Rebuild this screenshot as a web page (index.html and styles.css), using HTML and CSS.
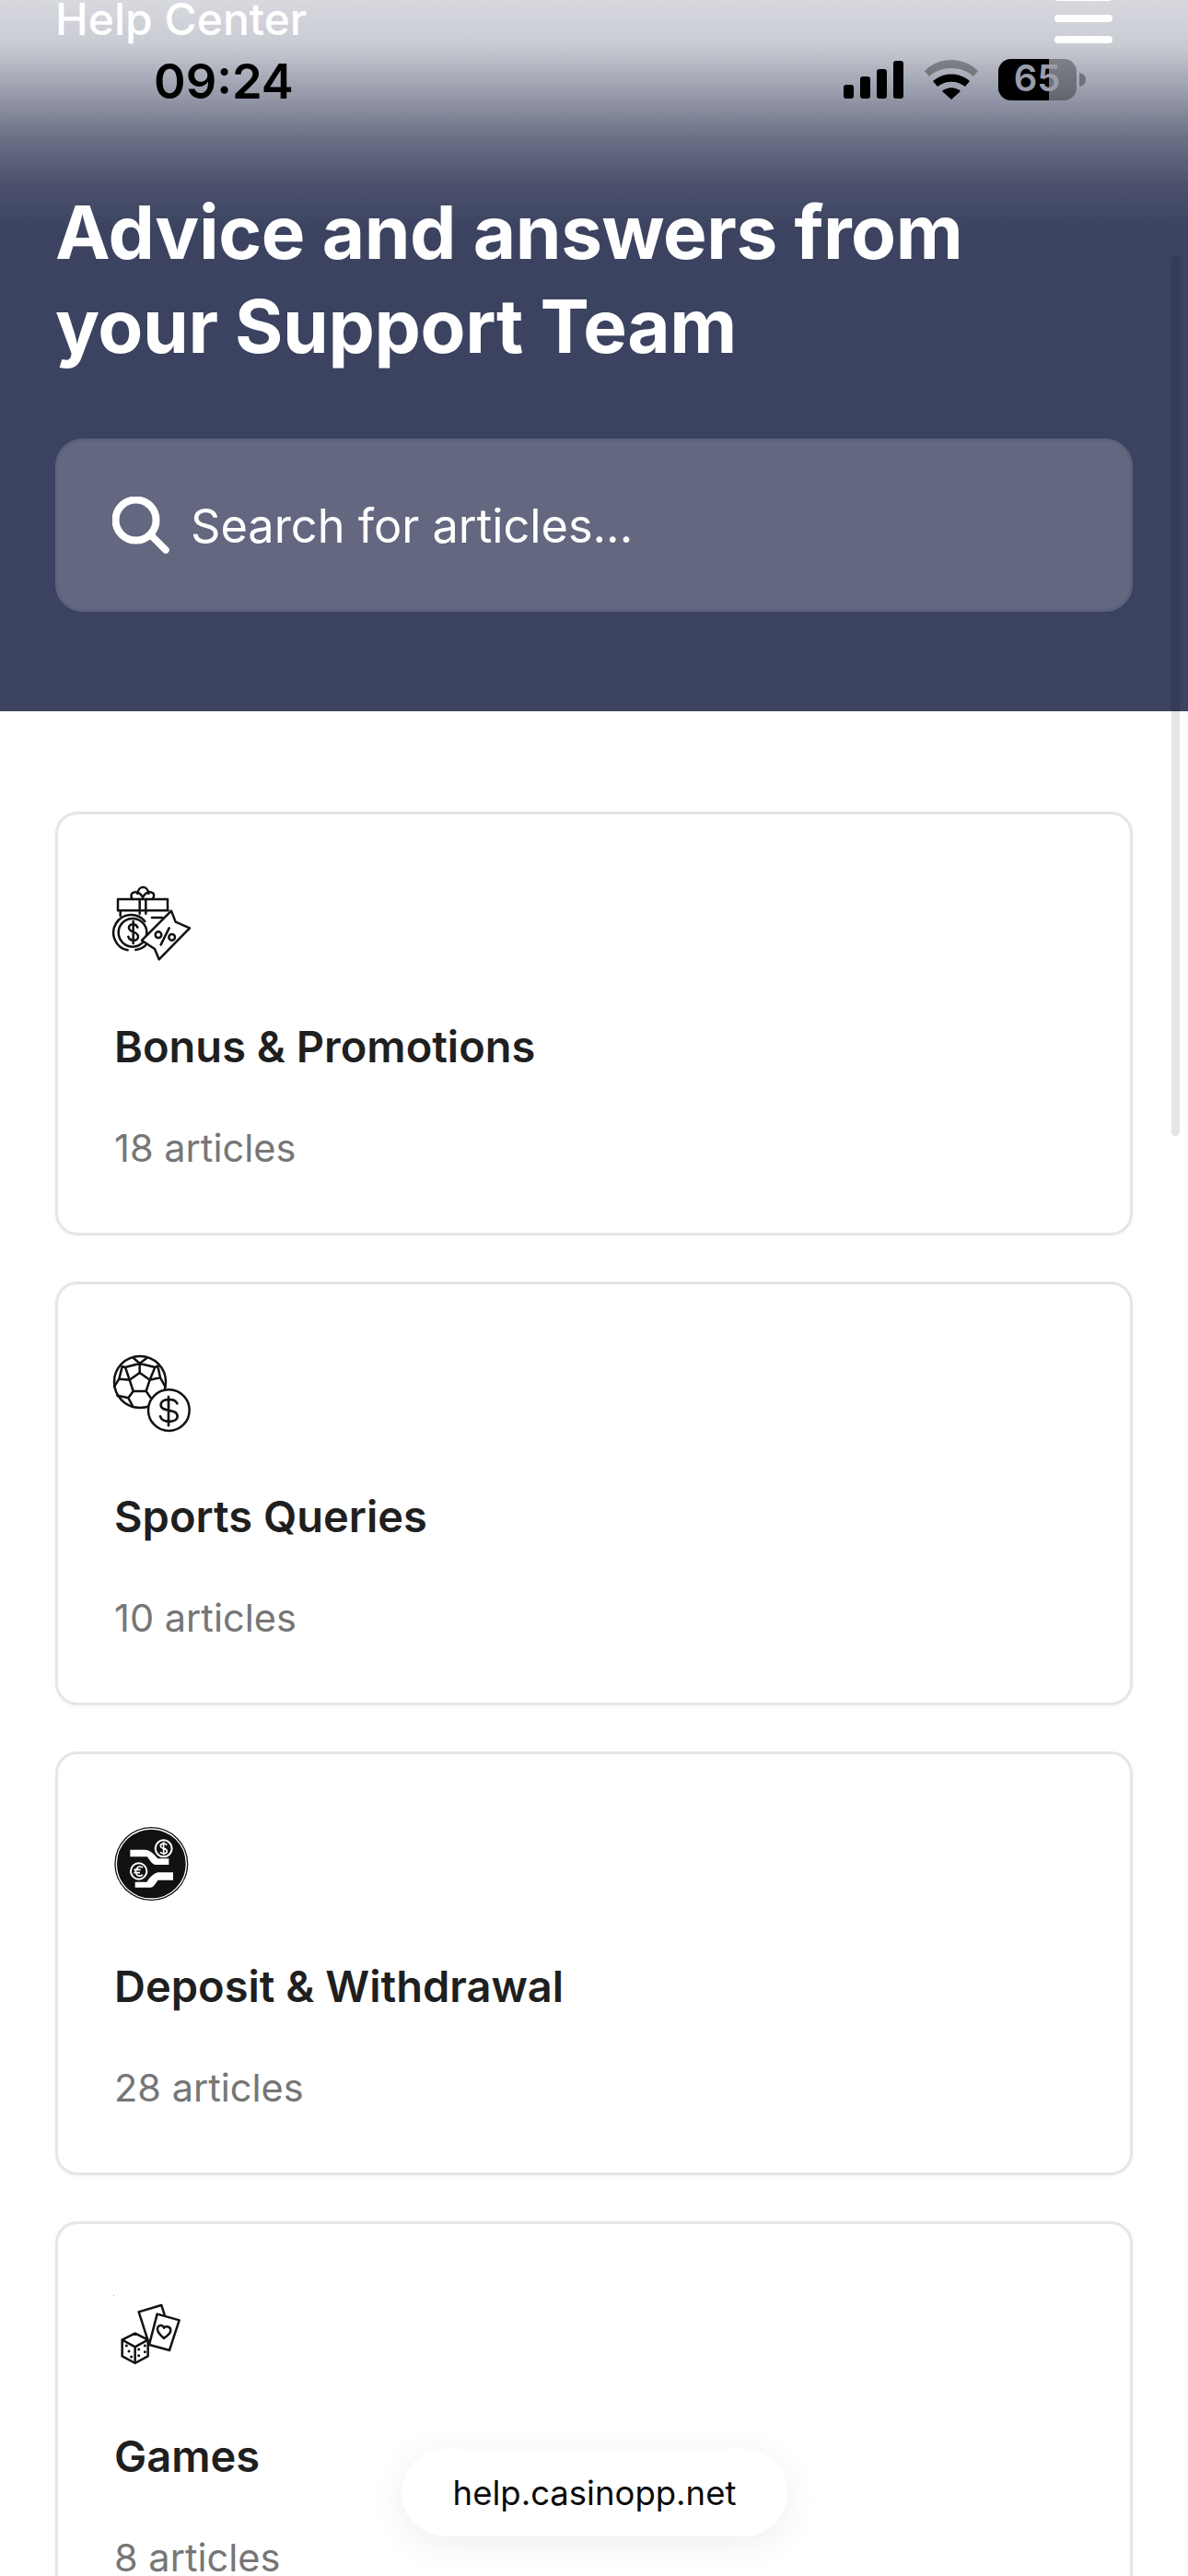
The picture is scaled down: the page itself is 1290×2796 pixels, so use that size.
FILE: index.html
```html
<!DOCTYPE html>
<html lang="en">
<head>
<meta charset="utf-8">
<title>Help Center</title>
<link rel="stylesheet" href="styles.css">
</head>
<body>
<div class="page">
  <header class="hero">
    <div class="topbar">
      <span class="brand">Help Center</span>
      <div class="burger"><i></i><i></i><i></i></div>
    </div>
    <h1 class="headline">Advice and answers from<br>your Support Team</h1>
    <div class="search">
      <svg class="search-icon" viewBox="0 0 62 62"><circle cx="25.5" cy="25.5" r="22" fill="none" stroke="#fff" stroke-width="8"/><path d="M42 42 L58 58" stroke="#fff" stroke-width="7.5" stroke-linecap="round"/></svg>
      <span class="search-text">Search for articles...</span>
    </div>
  </header>

  <main class="list">
    <a class="card">
      <svg class="card-icon" viewBox="69 39 252 252" fill="none" stroke="#111" stroke-width="7.5" stroke-linejoin="round" stroke-linecap="round">
        <path d="M92 132 V115 M84 115 V78 H246 V115 M84 115 H248"/>
        <path d="M195 138 H228 M155 78 V125 M175 78 V125"/>
        <path d="M130 76 C118 52 150 46 165 72 C180 46 212 52 198 76"/>
        <path d="M148 60 C150 32 182 32 184 60"/>
        <path d="M116 244 A58 58 0 1 1 172 150 M142 243 A58 58 0 0 0 180 222"/>
        <circle cx="132" cy="187" r="46"/>
        <path d="M148 170 C144 156 118 156 120 172 C122 188 150 182 150 200 C150 216 122 216 118 200 M134 150 V222"/>
        <path d="M162 212 L258 116 L272 152 L318 172 L218 274 L204 240 Z" fill="#fff"/>
        <circle cx="216" cy="194" r="10"/><circle cx="260" cy="202" r="10"/><path d="M251 172 L224 226"/>
      </svg>
      <h2 class="card-title">Bonus &amp; Promotions</h2>
      <p class="card-meta">18 articles</p>
    </a>
    <a class="card">
      <svg class="card-icon" viewBox="69 39 252 252" fill="none" stroke="#111" stroke-width="7.5" stroke-linejoin="round" stroke-linecap="round">
        <circle cx="156" cy="120" r="84"/>
        <path d="M155 90 L188 113 L176 150 L134 150 L122 113 Z"/>
        <path d="M155 90 V60 L108 72 L122 113 L88 110 M155 60 L205 72 L188 113 L222 106 M134 150 L118 172 L132 198 M176 150 L190 170 M118 172 L82 164 M108 72 L98 70 L88 110 L72 135 M205 72 L214 68 L222 106 L238 135 M135 42 L155 60 L178 42"/>
        <circle cx="250" cy="212" r="67" fill="#fff"/>
        <path d="M277 190 C270 172 226 172 224 194 C222 220 278 204 278 232 C278 254 228 254 222 232 M249 168 V262" stroke-width="8"/>
      </svg>
      <h2 class="card-title">Sports Queries</h2>
      <p class="card-meta">10 articles</p>
    </a>
    <a class="card">
      <svg class="card-icon" viewBox="69 39 252 252">
        <circle cx="193" cy="159" r="120" fill="#111"/>
        <circle cx="193" cy="159" r="114" fill="none" stroke="#fff" stroke-width="4"/>
        <path d="M124 113 H172 C186 113 204 128 214 142 H250 V162 H206 C198 162 190 152 180 136 H124 Z" fill="#fff"/>
        <circle cx="233" cy="109" r="27" fill="#111" stroke="#fff" stroke-width="6"/>
        <path d="M244 98 C238 90 222 92 223 102 C224 112 244 106 244 118 C244 128 226 128 222 120 M233 88 V130" fill="none" stroke="#fff" stroke-width="5"/>
        <path d="M264 187 H218 C204 187 190 200 178 218 H140 V236 H190 C198 236 206 226 214 212 H264 Z" fill="#fff"/>
        <circle cx="152" cy="183" r="26" fill="#111" stroke="#fff" stroke-width="6"/>
        <path d="M165 171 C150 162 142 176 142 184 C142 194 150 204 165 195 M136 178 H158 M136 188 H156" fill="none" stroke="#fff" stroke-width="5"/>
      </svg>
      <h2 class="card-title">Deposit &amp; Withdrawal</h2>
      <p class="card-meta">28 articles</p>
    </a>
    <a class="card">
      <svg class="card-icon" viewBox="69 69 252 252" fill="none" stroke="#111" stroke-width="7.5" stroke-linejoin="round" stroke-linecap="round">
        <circle cx="70" cy="64" r="1.5" fill="#777" stroke="none"/>
        <path d="M152 118 L226 96 L236 128 M152 118 L180 205"/>
        <path d="M212 125 L284 145 L252 243 L186 225 Z"/>
        <path d="M234 204 C220 192 208 180 214 168 C220 158 232 162 234 170 C240 162 256 166 256 178 C256 188 246 196 234 204 Z"/>
        <path d="M140 188 L182 209 V262 L140 285 L98 262 V209 Z M98 209 L140 232 L182 209 M140 232 V285" fill="#fff"/>
        <g fill="#111" stroke="none"><circle cx="112" cy="228" r="4.5"/><circle cx="120" cy="246" r="4.5"/><circle cx="128" cy="264" r="4.5"/><circle cx="152" cy="240" r="4.5"/><circle cx="172" cy="228" r="4.5"/><circle cx="152" cy="260" r="4.5"/><circle cx="172" cy="248" r="4.5"/></g>
      </svg>
      <h2 class="card-title">Games</h2>
      <p class="card-meta">8 articles</p>
    </a>
  </main>

  <div class="fade"></div>
  <div class="status">
    <span class="clock">09:24</span>
    <svg class="status-icons" viewBox="0 0 270 48">
      <g fill="#000"><rect x="0" y="27" width="11" height="15" rx="3"/><rect x="18" y="18" width="11" height="24" rx="3"/><rect x="36" y="10" width="11" height="32" rx="3"/><rect x="54" y="1" width="11" height="41" rx="3"/></g>
      <path d="M88 12 C104 -4 130 -4 146 12 L141 18 C128 6 106 6 93 18 Z" fill="#000" opacity=".32"/>
      <path d="M97 23 C108 13 126 13 137 23 L132 29 C123 22 111 22 102 29 Z" fill="#000"/>
      <path d="M107 34 C113 29 121 29 127 34 L117 43 Z" fill="#000"/>
      <rect x="168" y="-1" width="85" height="45" rx="14" fill="#000" opacity=".32"/>
      <path d="M182 -1 H223 V44 H182 A14 14 0 0 1 168 30 V13 A14 14 0 0 1 182 -1 Z" fill="#000"/>
      <path d="M256 14 C261 15 263 18 263 21 C263 25 261 28 256 29 Z" fill="#000" opacity=".32"/>
    </svg>
    <span class="battery">65</span>
  </div>
  <div class="scrollbar"></div>
  <div class="url-pill">help.casinopp.net</div>
</div>
</body>
</html>
```

FILE: styles.css
```css
* { box-sizing: border-box; }
html, body { margin: 0; padding: 0; background: #fff; }
body { font-family: Inter, "Liberation Sans", sans-serif; }
.page { position: relative; width: 1290px; height: 2796px; overflow: hidden; background: #fff; }

.hero { height: 772px; background: #3c4360; padding: 0 60px; color: #fff; }
.topbar { display: flex; justify-content: space-between; height: 175px; padding-right: 22px; }
.brand { font-size: 48px; font-weight: 500; line-height: 48px; margin-top: -3px; }
.burger { display: flex; flex-direction: column; gap: 15px; margin-top: -7px; width: 63px; }
.burger i { display: block; height: 8px; border-radius: 4px; background: #fff; }
.headline { margin: 26px 0 0; font-size: 80px; line-height: 102px; font-weight: 700; letter-spacing: -.4px; height: 204px; }
.search { display: flex; align-items: center; gap: 23px; height: 188px; margin-top: 71px; padding: 0 59px; background: #636880; border: 3px solid #5c627b; border-radius: 30px; }
.search-icon { width: 62px; height: 62px; flex: none; }
.search-text { font-size: 50.5px; font-weight: 400; color: #fff; }

.list { display: flex; flex-direction: column; gap: 50px; padding: 109px 60px 0; }
.card { display: block; height: 460px; flex: none; padding: 79px 60px 0; background: #fff; border: 3px solid #e6e6e6; border-radius: 24px; box-shadow: 0 1px 4px rgba(0,0,0,.04); }
.card-icon { display: block; width: 84px; height: 84px; overflow: visible; }
.card-title { margin: 59px 0 0 1px; font-size: 47px; line-height: 60px; font-weight: 600; color: #1f1f1f; }
.card-meta { margin: 50px 0 0 1px; font-size: 41.5px; line-height: 60px; font-weight: 400; color: #767676; }

.fade { position: absolute; left: 0; top: 0; width: 100%; height: 250px; background: linear-gradient(to bottom, rgba(255,255,255,.8) 0, rgba(255,255,255,.72) 50px, rgba(255,255,255,.48) 100px, rgba(255,255,255,.24) 150px, rgba(255,255,255,.08) 200px, rgba(255,255,255,0) 250px); pointer-events: none; }
.status { position: absolute; left: 0; top: 0; width: 100%; height: 130px; }
.clock { position: absolute; left: 167px; top: 56px; font-size: 52.5px; line-height: 64px; font-weight: 600; color: #000; }
.status-icons { position: absolute; left: 916px; top: 65px; width: 270px; height: 48px; overflow: visible; }
.battery { position: absolute; left: 1083px; top: 63px; width: 86px; text-align: center; font-size: 40px; line-height: 44px; font-weight: 600; color: #9a9cab; }
.scrollbar { position: absolute; left: 1272px; top: 277px; width: 9px; height: 956px; border-radius: 5px; background: rgba(0,0,0,.1); }
.url-pill { position: absolute; left: 436px; top: 2658px; width: 419px; height: 95px; border-radius: 48px; background: #fff; box-shadow: 0 8px 40px rgba(0,0,0,.07); display: flex; align-items: center; justify-content: center; font-size: 36.5px; color: #0a0a0a; }
```
